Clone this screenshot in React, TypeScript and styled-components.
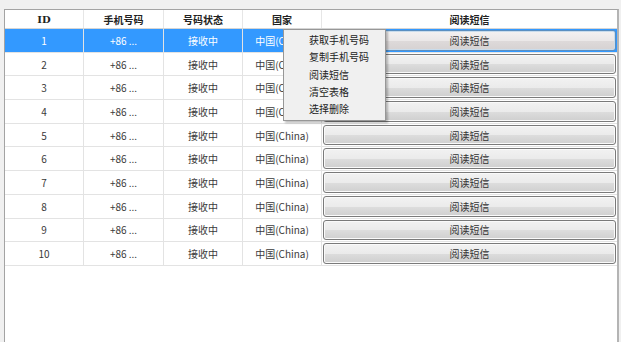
import React from 'react'
import styled, { createGlobalStyle } from 'styled-components'

const GlobalStyle = createGlobalStyle`
  html, body {
    margin: 0;
    padding: 0;
    background: #f0f0f0;
    font-family: "Noto Sans CJK SC", "Noto Sans", sans-serif;
  }
`

const Page = styled.div`
  width: 621px;
  height: 342px;
  box-sizing: border-box;
  padding: 9px 2px 0 4px;
  overflow: hidden;
`

const Frame = styled.div`
  position: relative;
  height: 333px;
  box-sizing: border-box;
  background: #fff;
  border: 1px solid #a3a3a3;
  border-bottom: none;
  border-right: 2px solid #b4b4b4;
`

const Row = styled.div<{ $head?: boolean; $selected?: boolean }>`
  display: grid;
  grid-template-columns: 79px 80px 79px 79px 1fr;
  height: ${p => (p.$head ? '19px' : '23.7px')};
  box-sizing: border-box;
  border-bottom: 1px solid ${p => (p.$head ? '#d5d5d5' : '#e3e3e3')};
  background: ${p => (p.$selected ? '#3399ff' : '#fff')};
  color: ${p => (p.$selected ? '#fff' : '#3a3a3a')};
`

const Cell = styled.div<{ $head?: boolean }>`
  display: flex;
  align-items: center;
  justify-content: center;
  font-size: 10px;
  font-weight: ${p => (p.$head ? 700 : 400)};
  color: ${p => (p.$head ? '#222' : 'inherit')};
  border-right: 1px solid ${p => (p.$head ? '#e6e6e6' : '#e3e3e3')};
  white-space: nowrap;
  overflow: hidden;
  &:last-child {
    border-right: none;
  }
`

const IdHead = styled.span`
  font-family: "DejaVu Serif", "Liberation Serif", serif;
  font-size: 10px;
  font-weight: 700;
`

const BtnCell = styled.div`
  display: flex;
  align-items: stretch;
  padding: 1px 1px 1px 1px;
`

const ReadButton = styled.button<{ $active?: boolean }>`
  flex: 1;
  margin: 0;
  padding: 0;
  font-family: "Noto Sans CJK SC", sans-serif;
  font-size: 10px;
  color: #333;
  border-radius: 3px;
  border: 1px solid ${p => (p.$active ? '#5b8fc0' : '#7a7a7a')};
  box-shadow: ${p => (p.$active ? 'inset 0 0 0 1px #c9dcec' : 'inset 0 0 0 1px #fafafa')};
  background: ${p =>
    p.$active
      ? 'linear-gradient(#f4f2f2 0%, #ebe8e8 50%, #dedada 51%, #d6d2d2 100%)'
      : 'linear-gradient(#f2f2f2 0%, #ebebeb 50%, #dddddd 51%, #cfcfcf 100%)'};
`

const Menu = styled.div`
  position: absolute;
  left: 278px;
  top: 19px;
  width: 103px;
  box-sizing: border-box;
  padding: 1px 0 3px;
  background: #f0f0f0;
  border: 1px solid #979797;
  box-shadow: 2px 2px 2px rgba(0, 0, 0, 0.25);
`

const MenuItem = styled.div`
  height: 17.3px;
  display: flex;
  align-items: center;
  padding-left: 25px;
  font-size: 10px;
  color: #222;
`

const rows = Array.from({ length: 10 }, (_, i) => i + 1)

const menu = ['获取手机号码', '复制手机号码', '阅读短信', '清空表格', '选择删除']

export default function App() {
  return (
    <Page>
      <GlobalStyle />
      <Frame>
        <Row $head>
          <Cell $head><IdHead>ID</IdHead></Cell>
          <Cell $head>手机号码</Cell>
          <Cell $head>号码状态</Cell>
          <Cell $head>国家</Cell>
          <Cell $head>阅读短信</Cell>
        </Row>
        {rows.map(n => (
          <Row key={n} $selected={n === 1}>
            <Cell>{n}</Cell>
            <Cell>+86 ...</Cell>
            <Cell>接收中</Cell>
            <Cell>中国(China)</Cell>
            <BtnCell>
              <ReadButton $active={n === 1}>阅读短信</ReadButton>
            </BtnCell>
          </Row>
        ))}
        <Menu>
          {menu.map(m => (
            <MenuItem key={m}>{m}</MenuItem>
          ))}
        </Menu>
      </Frame>
    </Page>
  )
}
